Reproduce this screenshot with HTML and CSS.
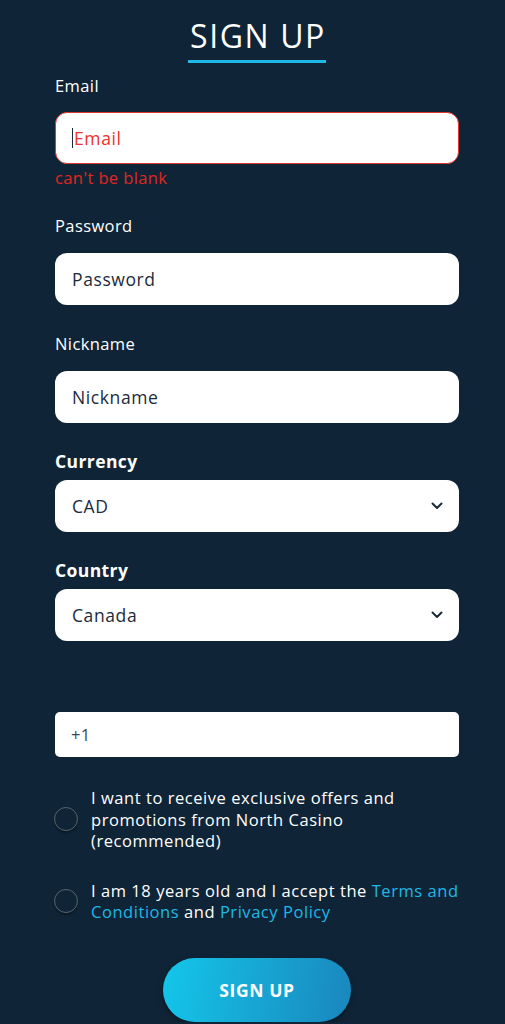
FILE: index.html
```html
<!DOCTYPE html>
<html>
<head>
<meta charset="utf-8">
<link rel="stylesheet" href="styles.css">
</head>
<body>
<div class="page">
  <div class="title-wrap"><h1 class="title">SIGN UP</h1></div>

  <div class="field">
    <label class="label label-first">Email</label>
    <div class="input input-error"><span class="caret"></span><span class="ph-error">Email</span></div>
    <div class="error">can't be blank</div>
  </div>

  <div class="field">
    <label class="label label-pw">Password</label>
    <div class="input"><span class="ph">Password</span></div>
  </div>

  <div class="field">
    <label class="label">Nickname</label>
    <div class="input"><span class="ph">Nickname</span></div>
  </div>

  <div class="field">
    <label class="label label-bold">Currency</label>
    <div class="input select"><span class="val">CAD</span>
      <svg class="chev" width="12" height="8" viewBox="0 0 12 8"><path d="M1.5 1.5 L6 6 L10.5 1.5" fill="none" stroke="#1b2b3b" stroke-width="2" stroke-linecap="round" stroke-linejoin="round"/></svg>
    </div>
  </div>

  <div class="field">
    <label class="label label-bold">Country</label>
    <div class="input select"><span class="val">Canada</span>
      <svg class="chev" width="12" height="8" viewBox="0 0 12 8"><path d="M1.5 1.5 L6 6 L10.5 1.5" fill="none" stroke="#1b2b3b" stroke-width="2" stroke-linecap="round" stroke-linejoin="round"/></svg>
    </div>
  </div>

  <div class="phone"><span class="code">+1</span></div>

  <div class="check">
    <span class="radio"></span>
    <p class="check-text">I want to receive exclusive offers and promotions from North Casino (recommended)</p>
  </div>

  <div class="check check-2">
    <span class="radio"></span>
    <p class="check-text">I am 18 years old and I accept the <a class="link">Terms and Conditions</a> and <a class="link">Privacy Policy</a></p>
  </div>

  <div class="btn-wrap"><button class="btn">SIGN UP</button></div>
</div>
</body>
</html>
```

FILE: styles.css
```css
html, body {
  margin: 0;
  padding: 0;
  background: #0f2537;
}
body {
  font-family: "Open Sans", "Lato", sans-serif;
  color: #ffffff;
  letter-spacing: 0.4px;
}
.page {
  padding: 0 46px 0 55px;
  width: 404px;
}
.title-wrap {
  display: flex;
  justify-content: center;
  padding-top: 16px;
}
.title {
  margin: 0;
  font-size: 32px;
  font-weight: 400;
  letter-spacing: 1.6px;
  line-height: 40px;
  padding: 0 0 4px 2px;
  border-bottom: 3px solid #1fb8e6;
}
.field {
  display: flex;
  flex-direction: column;
}
.label {
  font-size: 16.5px;
  line-height: 20px;
  margin-top: 29px;
  margin-bottom: 17px;
}
.label-first {
  margin-top: 13px;
  margin-bottom: 16px;
}
.label-pw {
  margin-top: 28px;
}
.label-bold {
  font-weight: 700;
  font-size: 17.5px;
  margin-top: 28px;
  margin-bottom: 9px;
}
.input {
  height: 52px;
  box-sizing: border-box;
  background: #fff;
  border-radius: 12px;
  display: flex;
  align-items: center;
  padding: 0 17px;
  font-size: 17.5px;
  letter-spacing: 0.6px;
  color: #1b2b3b;
}
.input-error {
  border: 1px solid #e0352b;
  padding-left: 16px;
}
.caret {
  width: 1px;
  height: 20px;
  background: #1b2b3b;
  margin-right: 1px;
}
.ph-error {
  color: #f0302a;
}
.ph {
  color: #1b2b3b;
}
.error {
  color: #e0261f;
  font-size: 16.5px;
  line-height: 20px;
  margin-top: 4px;
}
.select {
  justify-content: space-between;
}
.chev {
  margin-right: -1px;
}
.phone {
  margin-top: 71px;
  height: 45px;
  box-sizing: border-box;
  background: #fff;
  border-radius: 5px;
  display: flex;
  align-items: center;
  padding: 0 16px;
  font-size: 16.5px;
  color: #3a4856;
}
.check {
  display: flex;
  align-items: center;
  margin-top: 30px;
}
.check-2 {
  margin-top: 28px;
}
.radio {
  flex: none;
  width: 22px;
  height: 22px;
  border: 1.5px solid #56646f;
  border-radius: 50%;
  box-shadow: 0 2px 2px rgba(0,0,0,0.35);
  margin-right: 13px;
  margin-left: -1px;
}
.check-text {
  margin: 0;
  font-size: 16.5px;
  line-height: 21.5px;
  letter-spacing: 0.55px;
}
.link {
  color: #1fb8e6;
}
.btn-wrap {
  display: flex;
  justify-content: center;
  margin-top: 35px;
}
.btn {
  width: 188px;
  height: 64px;
  border: none;
  border-radius: 32px;
  background: linear-gradient(100deg, #14c6ea 0%, #1a86bd 100%);
  color: #fff;
  font-family: "Open Sans", sans-serif;
  font-weight: 700;
  font-size: 17.5px;
  letter-spacing: 0.6px;
  box-shadow: 0 3px 6px rgba(0,0,0,0.35);
}
```
